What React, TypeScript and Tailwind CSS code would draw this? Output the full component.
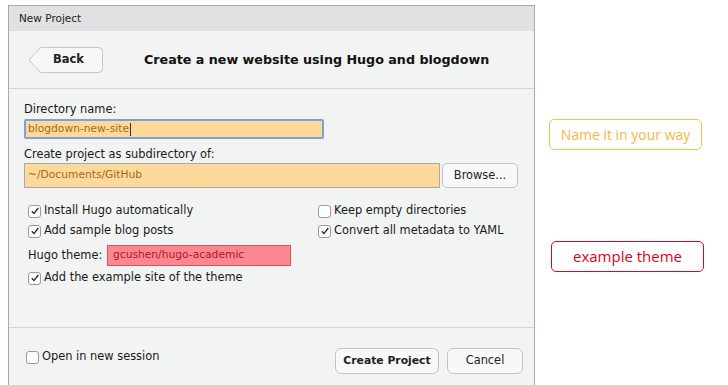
import React from 'react';

const ui = { fontFamily: '"DejaVu Sans", "Liberation Sans", sans-serif' };

function Check({ checked }: { checked?: boolean }) {
  return (
    <span className="inline-flex h-[13px] w-[13px] shrink-0 items-center justify-center rounded-[3px] border border-[#9a9a9a] bg-white">
      {checked && (
        <svg width="10" height="10" viewBox="0 0 10 10">
          <path d="M1.8 5.2 L4 7.6 L8.3 2" fill="none" stroke="#222" strokeWidth="1.3" />
        </svg>
      )}
    </span>
  );
}

function CheckRow({ label, checked }: { label: string; checked?: boolean }) {
  return (
    <label className="flex h-[20px] items-center gap-[3px] text-[11.4px] text-[#1a1a1a]">
      <Check checked={checked} />
      <span>{label}</span>
    </label>
  );
}

export default function App() {
  return (
    <div className="flex h-[385px] w-[728px] bg-white" style={ui}>
      <div className="ml-[8px] mt-[5px] flex w-[527px] flex-col border-x border-t border-[#a9a9a9] bg-[#f2f3f3]">
        <div className="flex h-[25px] items-center bg-[#e1e1e3] pl-[10px] text-[10.5px] text-[#222]">
          New Project
        </div>

        <div className="flex h-[58px] items-center border-b border-[#d4d4d4] pl-[19px]">
          <div className="relative flex h-[26px] w-[75px] items-center justify-center">
            <svg className="absolute inset-0" width="75" height="26" viewBox="0 0 75 26">
              <path
                d="M12.5 0.5 H70.5 Q74.5 0.5 74.5 4.5 V21.5 Q74.5 25.5 70.5 25.5 H12.5 L1 13 Z"
                fill="#f7f7f7"
                stroke="#c6c6c6"
              />
            </svg>
            <span className="relative pl-[6px] text-[11.5px] font-bold text-[#222]">Back</span>
          </div>
          <div className="ml-[41px] text-[12.7px] font-bold text-[#111]">
            Create a new website using Hugo and blogdown
          </div>
        </div>

        <div className="flex h-[239px] flex-col border-b border-[#d4d4d4] pl-[15px] pt-[11px]">
          <div className="text-[11.4px] leading-[18px] text-[#1a1a1a]">Directory name:</div>
          <div className="mt-[1px] flex h-[20px] w-[300px] items-center rounded-[2px] border-2 border-[#7aa2d8] bg-[#fed99a] pl-[2px] text-[10.7px] text-[#a5691f]">
            blogdown-new-site<span className="ml-[1px] h-[13px] w-px bg-[#333]" />
          </div>
          <div className="mt-[6px] text-[11.4px] leading-[18px] text-[#1a1a1a]">
            Create project as subdirectory of:
          </div>
          <div className="flex items-center gap-[2px]">
            <div className="flex h-[25px] w-[416px] items-center border border-[#a8a8a8] bg-[#fed99a] pl-[3px] text-[10.7px] text-[#a5691f]">
              ~/Documents/GitHub
            </div>
            <button className="h-[25px] w-[76px] rounded-[5px] border border-[#c3c3c3] bg-[#f8f8f8] text-[11.4px] text-[#222]">
              Browse...
            </button>
          </div>

          <div className="mt-[13px] flex">
            <div className="flex w-[294px] flex-col pl-[4px]">
              <CheckRow label="Install Hugo automatically" checked />
              <CheckRow label="Add sample blog posts" checked />
              <div className="mt-[4px] flex h-[21px] items-center text-[11.4px] text-[#1a1a1a]">
                <span className="w-[75px]">Hugo theme:</span>
                <div className="ml-[4px] flex h-[21px] w-[184px] items-center border border-[#e0505e] bg-[#fb8790] pl-[5px] text-[10.7px] text-[#b0172a]">
                  gcushen/hugo-academic
                </div>
              </div>
              <div className="mt-[2px]">
                <CheckRow label="Add the example site of the theme" checked />
              </div>
            </div>
            <div className="flex flex-col">
              <CheckRow label="Keep empty directories" />
              <CheckRow label="Convert all metadata to YAML" checked />
            </div>
          </div>
        </div>

        <div className="flex flex-1 items-start pl-[17px] pr-[11px]">
          <div className="mt-[19px]">
            <CheckRow label="Open in new session" />
          </div>
          <div className="ml-auto mt-[20px] flex gap-[8px]">
            <button className="h-[26px] w-[104px] rounded-[6px] border border-[#c3c3c3] bg-[#f8f8f8] text-[10.8px] font-bold text-[#222]">
              Create Project
            </button>
            <button className="h-[26px] w-[76px] rounded-[6px] border border-[#c3c3c3] bg-[#f8f8f8] text-[11.4px] text-[#222]">
              Cancel
            </button>
          </div>
        </div>
      </div>

      <div className="flex flex-col pl-[14px]" style={{ fontFamily: '"Open Sans", sans-serif' }}>
        <div className="mt-[119px] flex h-[31px] w-[153px] items-center justify-center rounded-[5px] border border-[#fbbf4e] text-[14px] text-[#f8b547]">
          Name it in your way
        </div>
        <div className="ml-[2px] mt-[91px] flex h-[31px] w-[153px] items-center justify-center rounded-[5px] border border-[#e8001c] text-[15px] text-[#e0001a]">
          example theme
        </div>
      </div>
    </div>
  );
}
